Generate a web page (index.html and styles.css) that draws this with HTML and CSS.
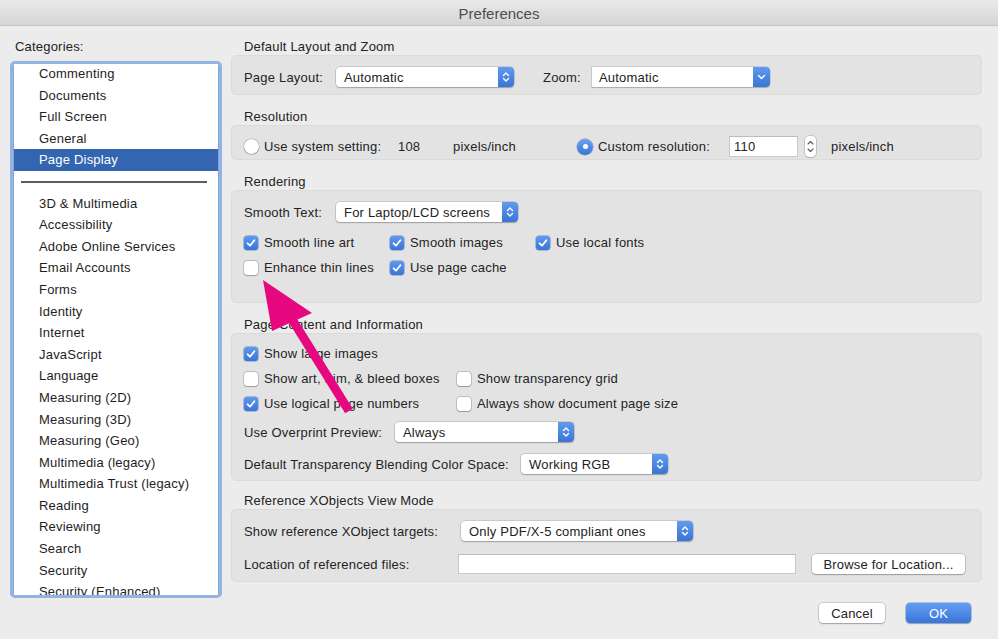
FILE: index.html
```html
<!DOCTYPE html>
<html>
<head>
<meta charset="utf-8">
<title>Preferences</title>
<link rel="stylesheet" href="styles.css">
</head>
<body>
<div class="titlebar">Preferences</div>
<div class="main">
  <aside class="sidebar">
    <div class="cat-label">Categories:</div>
    <div class="listbox">
      <ul class="list">
        <li>Commenting</li>
        <li>Documents</li>
        <li>Full Screen</li>
        <li>General</li>
        <li class="selected">Page Display</li>
        <li class="sep"></li>
        <li>3D &amp; Multimedia</li>
        <li>Accessibility</li>
        <li>Adobe Online Services</li>
        <li>Email Accounts</li>
        <li>Forms</li>
        <li>Identity</li>
        <li>Internet</li>
        <li>JavaScript</li>
        <li>Language</li>
        <li>Measuring (2D)</li>
        <li>Measuring (3D)</li>
        <li>Measuring (Geo)</li>
        <li>Multimedia (legacy)</li>
        <li>Multimedia Trust (legacy)</li>
        <li>Reading</li>
        <li>Reviewing</li>
        <li>Search</li>
        <li>Security</li>
        <li>Security (Enhanced)</li>
      </ul>
    </div>
  </aside>

  <section class="content">
    <div class="section">
      <div class="heading">Default Layout and Zoom</div>
      <div class="group g1">
        <div class="row">
          <span class="lbl w-pl">Page Layout:</span>
          <div class="popup w-pl-pop"><span class="val">Automatic</span><span class="cap"><svg width="16" height="20" viewBox="0 0 16 20"><polyline points="5.5,8.5 8,6 10.5,8.5"/><polyline points="5.5,11.5 8,14 10.5,11.5"/></svg></span></div>
          <span class="lbl w-zoom">Zoom:</span>
          <div class="combo"><span class="val">Automatic</span><span class="cap"><svg width="17" height="20" viewBox="0 0 17 20"><polyline points="5.5,8.5 8.5,11.5 11.5,8.5"/></svg></span></div>
        </div>
      </div>
    </div>

    <div class="section">
      <div class="heading">Resolution</div>
      <div class="group g2">
        <div class="row r21">
          <span class="radio"></span>
          <span class="lbl w-sys">Use system setting:</span>
          <span class="lbl w-108">108</span>
          <span class="lbl w-ppi">pixels/inch</span>
          <span class="radio on"></span>
          <span class="lbl w-cust">Custom resolution:</span>
          <span class="field w-res">110</span>
          <span class="stepper"><svg width="11" height="21" viewBox="0 0 11 21"><polyline points="3,8 5.5,5.5 8,8"/><polyline points="3,13 5.5,15.5 8,13"/></svg></span>
          <span class="lbl">pixels/inch</span>
        </div>
      </div>
    </div>

    <div class="section">
      <div class="heading">Rendering</div>
      <div class="group g3">
        <div class="row">
          <span class="lbl w-pl">Smooth Text:</span>
          <div class="popup w-st-pop"><span class="val">For Laptop/LCD screens</span><span class="cap"><svg width="16" height="20" viewBox="0 0 16 20"><polyline points="5.5,8.5 8,6 10.5,8.5"/><polyline points="5.5,11.5 8,14 10.5,11.5"/></svg></span></div>
        </div>
        <div class="checks cols-r">
          <label class="chk"><span class="box on"><svg viewBox="0 0 14 14"><path d="M3.6 7.3 L6 9.7 L10.4 4.3"/></svg></span>Smooth line art</label>
          <label class="chk"><span class="box on"><svg viewBox="0 0 14 14"><path d="M3.6 7.3 L6 9.7 L10.4 4.3"/></svg></span>Smooth images</label>
          <label class="chk"><span class="box on"><svg viewBox="0 0 14 14"><path d="M3.6 7.3 L6 9.7 L10.4 4.3"/></svg></span>Use local fonts</label>
          <label class="chk"><span class="box"></span>Enhance thin lines</label>
          <label class="chk"><span class="box on"><svg viewBox="0 0 14 14"><path d="M3.6 7.3 L6 9.7 L10.4 4.3"/></svg></span>Use page cache</label>
        </div>
      </div>
    </div>

    <div class="section">
      <div class="heading">Page Content and Information</div>
      <div class="group g4">
        <div class="checks cols-p">
          <label class="chk"><span class="box on"><svg viewBox="0 0 14 14"><path d="M3.6 7.3 L6 9.7 L10.4 4.3"/></svg></span>Show large images</label>
          <span></span>
          <label class="chk"><span class="box"></span>Show art, trim, &amp; bleed boxes</label>
          <label class="chk"><span class="box"></span>Show transparency grid</label>
          <label class="chk"><span class="box on"><svg viewBox="0 0 14 14"><path d="M3.6 7.3 L6 9.7 L10.4 4.3"/></svg></span>Use logical page numbers</label>
          <label class="chk"><span class="box"></span>Always show document page size</label>
        </div>
        <div class="row mt6">
          <span class="lbl w-op">Use Overprint Preview:</span>
          <div class="popup w-op-pop"><span class="val">Always</span><span class="cap"><svg width="16" height="20" viewBox="0 0 16 20"><polyline points="5.5,8.5 8,6 10.5,8.5"/><polyline points="5.5,11.5 8,14 10.5,11.5"/></svg></span></div>
        </div>
        <div class="row mt12">
          <span class="lbl w-tb">Default Transparency Blending Color Space:</span>
          <div class="popup w-tb-pop"><span class="val">Working RGB</span><span class="cap"><svg width="16" height="20" viewBox="0 0 16 20"><polyline points="5.5,8.5 8,6 10.5,8.5"/><polyline points="5.5,11.5 8,14 10.5,11.5"/></svg></span></div>
        </div>
      </div>
    </div>

    <div class="section last">
      <div class="heading">Reference XObjects View Mode</div>
      <div class="group g5">
        <div class="row">
          <span class="lbl w-xo">Show reference XObject targets:</span>
          <div class="popup w-xo-pop"><span class="val">Only PDF/X-5 compliant ones</span><span class="cap"><svg width="16" height="20" viewBox="0 0 16 20"><polyline points="5.5,8.5 8,6 10.5,8.5"/><polyline points="5.5,11.5 8,14 10.5,11.5"/></svg></span></div>
        </div>
        <div class="row mt13">
          <span class="lbl w-loc">Location of referenced files:</span>
          <span class="field w-locf"></span>
          <span class="btn w-browse">Browse for Location...</span>
        </div>
      </div>
    </div>

    <div class="footer">
      <span class="btn w-cancel">Cancel</span>
      <span class="btn primary w-ok">OK</span>
    </div>
  </section>
</div>

<svg class="arrow" width="998" height="639" viewBox="0 0 998 639">
  <line x1="290" y1="316" x2="349" y2="411" stroke="#e6087f" stroke-width="9"/>
  <polygon points="263,280 312,313 272,331" fill="#e6087f"/>
</svg>
</body>
</html>
```

FILE: styles.css
```css
html, body {
  margin: 0;
  padding: 0;
}
body {
  width: 998px;
  height: 639px;
  overflow: hidden;
  position: relative;
  background: #ececec;
  font-family: "Liberation Sans", Arial, sans-serif;
  font-size: 13px;
  letter-spacing: 0.2px;
  color: #232323;
}

.titlebar {
  height: 26px;
  box-sizing: border-box;
  padding-top: 2px;
  line-height: 24px;
  border-bottom: 1px solid #c4c4c4;
  background: linear-gradient(#e9e9e9, #d5d5d5);
  text-align: center;
  font-size: 15px;
  letter-spacing: 0;
  color: #4d4d4d;
}

.main {
  display: flex;
}

/* Sidebar */
.sidebar {
  width: 222px;
  box-sizing: border-box;
  padding: 13px 0 0 10px;
}
.cat-label {
  line-height: 16px;
  padding-left: 5px;
  margin-bottom: 6px;
}
.listbox {
  width: 212px;
  height: 537px;
  box-sizing: border-box;
  border: 3px solid #93b3e2;
  border-radius: 5px;
  padding: 1px;
  background: #fff;
  overflow: hidden;
  box-shadow: inset 0 0 0 1px #84a6dc;
}
.list {
  list-style: none;
  margin: -2px 0 0 0;
  padding: 0;
  background: #fff;
}
.list li {
  height: 21.6px;
  line-height: 21.6px;
  padding-left: 25px;
  white-space: nowrap;
  color: #1e1e1e;
}
.list li.selected {
  background: #3465b0;
  color: #fff;
}
.list li.sep {
  position: relative;
}
.list li.sep::after {
  content: "";
  position: absolute;
  left: 7px;
  right: 11px;
  top: 10px;
  height: 2px;
  background: #5e5e5e;
}

/* Content */
.content {
  width: 751px;
  margin-left: 9px;
  padding-top: 13px;
}
.section + .section {
  margin-top: 14px;
}
.section.last {
  margin-top: 12px;
}
.heading {
  height: 16px;
  line-height: 16px;
  padding-left: 13px;
}
.group {
  box-sizing: border-box;
  background: #e3e3e3;
  border: 1px solid #dbdbdb;
  border-radius: 5px;
  padding-left: 12px;
}
.g1 { height: 40px; padding-top: 11px; }
.g2 { height: 35px; padding-top: 10px; }
.g3 { height: 113px; padding-top: 11px; }
.g4 { height: 148px; padding-top: 7px; }
.g5 { height: 73px; padding-top: 11px; }

.row {
  display: flex;
  align-items: center;
  height: 20px;
}
.row.r21 { height: 21px; }
.mt6 { margin-top: 6px; }
.mt12 { margin-top: 12px; }
.mt13 { margin-top: 13px; }

.lbl {
  white-space: nowrap;
  flex: none;
}
.w-pl { width: 92px; }
.w-zoom { width: 49px; margin-left: 29px; }
.w-sys { width: 134px; }
.w-108 { width: 55px; }
.w-ppi { width: 124px; }
.w-cust { width: 131px; }
.w-op { width: 151px; }
.w-tb { width: 277px; }
.w-xo { width: 217px; }
.w-loc { width: 214px; }

/* Popup buttons */
.popup {
  display: flex;
  align-items: center;
  height: 20px;
  box-sizing: border-box;
  background: #fff;
  border-radius: 4px;
  box-shadow: 0 0 0 0.5px rgba(0,0,0,0.22), 0 1px 1.5px rgba(0,0,0,0.22);
  flex: none;
}
.popup .val, .combo .val {
  flex: 1;
  padding-left: 8px;
  white-space: nowrap;
}
.popup .cap {
  width: 16px;
  height: 20px;
  border-radius: 0 4px 4px 0;
  background: linear-gradient(#5f9bee, #3a74d5);
  display: flex;
}
.cap svg polyline {
  fill: none;
  stroke: #fff;
  stroke-width: 1.4;
  stroke-linecap: round;
  stroke-linejoin: round;
}
.w-pl-pop { width: 178px; }
.w-st-pop { width: 182px; }
.w-op-pop { width: 179px; }
.w-tb-pop { width: 147px; }
.w-xo-pop { width: 232px; }

.combo {
  display: flex;
  align-items: center;
  width: 178px;
  height: 20px;
  background: #fff;
  box-shadow: 0 0 0 0.5px rgba(0,0,0,0.22), 0 1px 1px rgba(0,0,0,0.15);
  border-radius: 0 4px 4px 0;
  flex: none;
}
.combo .val { padding-left: 7px; }
.combo .cap {
  width: 17px;
  height: 20px;
  border-radius: 0 4px 4px 0;
  background: linear-gradient(#5f9bee, #3a74d5);
  display: flex;
}

/* Radios */
.radio {
  width: 15px;
  height: 15px;
  box-sizing: border-box;
  border-radius: 50%;
  background: #fff;
  box-shadow: 0 0 0 0.5px rgba(0,0,0,0.3), 0 0.5px 1px rgba(0,0,0,0.2);
  margin-right: 5px;
  flex: none;
  position: relative;
}
.radio.on {
  width: 16px;
  height: 16px;
  background: linear-gradient(#6aa2f0, #3a74d5);
  box-shadow: 0 0 0 0.5px rgba(30,70,150,0.5);
}
.radio.on::after {
  content: "";
  position: absolute;
  left: 5.5px;
  top: 5.5px;
  width: 5px;
  height: 5px;
  border-radius: 50%;
  background: #fff;
}

/* Text fields */
.field {
  height: 21px;
  box-sizing: border-box;
  background: #fff;
  border: 1px solid #c9c9c9;
  border-top-color: #bdbdbd;
  padding-left: 4px;
  line-height: 19px;
  flex: none;
}
.w-res { width: 69px; margin-right: 7px; }
.w-locf { width: 338px; height: 20px; }

.stepper {
  width: 11px;
  height: 21px;
  background: #fff;
  border-radius: 4px;
  box-shadow: 0 0 0 0.5px rgba(0,0,0,0.25), 0 0.5px 1px rgba(0,0,0,0.2);
  margin-right: 15px;
  display: flex;
  flex: none;
}
.stepper svg polyline {
  fill: none;
  stroke: #5a5a5a;
  stroke-width: 1.1;
  stroke-linecap: round;
  stroke-linejoin: round;
}

/* Checkboxes */
.checks {
  display: grid;
  grid-auto-rows: 25px;
}
.g3 .checks { margin-top: 8px; }
.cols-r { grid-template-columns: 146px 146px auto; }
.cols-p { grid-template-columns: 213px auto; }
.chk {
  display: flex;
  align-items: center;
  white-space: nowrap;
}
.box {
  width: 14px;
  height: 14px;
  box-sizing: border-box;
  border-radius: 3px;
  background: #fff;
  box-shadow: 0 0 0 0.5px rgba(0,0,0,0.3), 0 0.5px 1px rgba(0,0,0,0.2);
  margin-right: 6px;
  flex: none;
  display: flex;
}
.box.on {
  background: linear-gradient(#5e9af0, #3974d8);
  box-shadow: 0 0 0 0.5px rgba(30,70,150,0.55);
}
.box svg {
  width: 14px;
  height: 14px;
}
.box svg path {
  fill: none;
  stroke: #fff;
  stroke-width: 1.8;
  stroke-linecap: round;
  stroke-linejoin: round;
}

/* Buttons */
.btn {
  height: 20px;
  box-sizing: border-box;
  display: flex;
  align-items: center;
  justify-content: center;
  background: #fff;
  border-radius: 4px;
  box-shadow: 0 0 0 0.5px rgba(0,0,0,0.25), 0 1px 1.5px rgba(0,0,0,0.22);
  white-space: nowrap;
  flex: none;
}
.w-browse { width: 153px; margin-left: 16px; }
.w-cancel { width: 66px; }
.w-ok { width: 65px; }
.btn.primary {
  background: linear-gradient(#629ef2, #3a75d8);
  color: #fff;
  box-shadow: 0 0 0 0.5px rgba(30,70,150,0.5), 0 1px 1.5px rgba(0,0,0,0.2);
}

.footer {
  display: flex;
  justify-content: flex-end;
  gap: 21px;
  margin-top: 21px;
  padding-right: 11px;
}

/* Annotation arrow overlay */
.arrow {
  position: absolute;
  left: 0;
  top: 0;
  pointer-events: none;
}
```
